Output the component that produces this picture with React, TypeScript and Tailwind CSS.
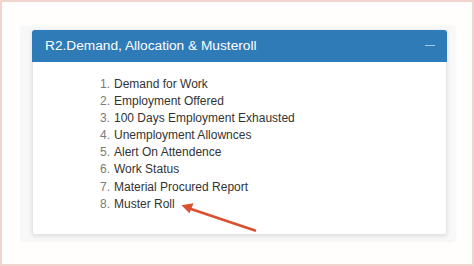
import React from "react";

const items = [
  "Demand for Work",
  "Employment Offered",
  "100 Days Employment Exhausted",
  "Unemployment Allownces",
  "Alert On Attendence",
  "Work Status",
  "Material Procured Report",
  "Muster Roll",
];

export default function App() {
  return (
    <div
      className="relative w-[474px] h-[266px] border-2 border-[#f2d4ce] bg-[#fffefd] overflow-hidden"
      style={{ fontFamily: '"Liberation Sans", Arial, sans-serif' }}
    >
      <div className="ml-[19px] mt-[24px] w-[434px] h-[214px] bg-[#f8f8f8] pl-[11px] pt-[4px] shadow-[0_1px_3px_rgba(0,0,0,0.06)]">
        <div className="w-[415px] h-[205px] bg-white border border-[#e3e6ea] rounded-[3px] shadow-[0_1px_4px_rgba(0,0,0,0.12)]">
          <div className="h-[32px] -mx-px -mt-px bg-[#2e7bb8] rounded-t-[3px] flex items-center justify-between pl-[13px] pr-[12px]">
            <span className="text-white text-[13.7px] leading-none pb-[1px]">
              R2.Demand, Allocation &amp; Musteroll
            </span>
            <span className="block w-[10px] h-[1.5px] bg-[#a9cbe6] mb-[1px]" />
          </div>
          <div className="pt-[14px] pl-[57px]">
            {items.map((t, i) => (
              <div key={t} className="flex text-[12px] leading-[17.1px]">
                <span className="w-[20px] text-right text-[#7a7a7a]">{i + 1}.</span>
                <span className="ml-[4px] text-[#333333]">{t}</span>
              </div>
            ))}
          </div>
        </div>
      </div>
      <svg
        className="absolute left-0 top-0"
        width="474"
        height="266"
        viewBox="0 0 474 266"
        style={{ transform: "translate(-2px,-2px)" }}
      >
        <line x1="255" y1="230.5" x2="188" y2="208" stroke="#d9512f" strokeWidth="2.6" strokeLinecap="round" />
        <polygon points="181.5,205.2 193.5,203.2 189.5,213.2" fill="#d9512f" />
      </svg>
    </div>
  );
}
